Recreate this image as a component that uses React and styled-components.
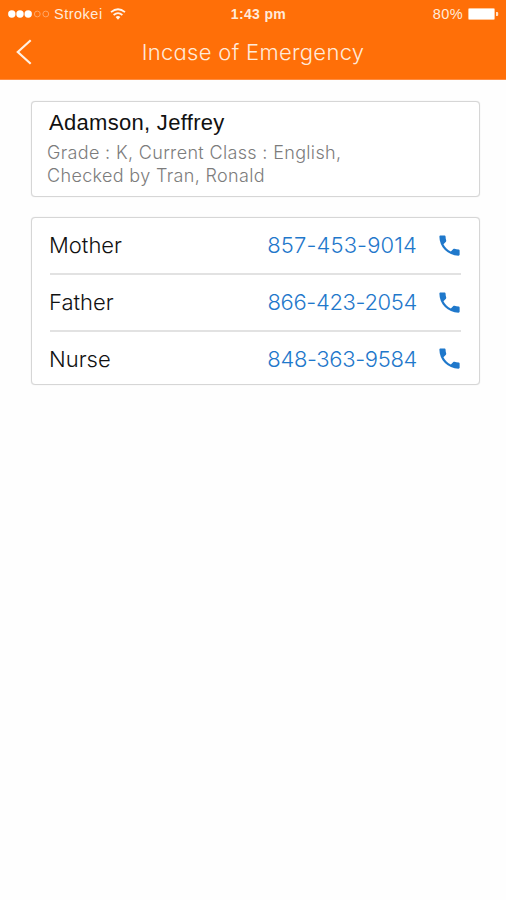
import React from 'react';
import styled, { createGlobalStyle } from 'styled-components';

const GlobalStyle = createGlobalStyle`
  * {
    box-sizing: border-box;
  }
  body {
    background: #fefefe;
    font-family: 'Liberation Sans', Arial, sans-serif;
    margin: 0;
  }
`;

const Screen = styled('div')`
  height: 900px;
  overflow: hidden;
  width: 506px;
`;

const Header = styled('header')`
  background: #ff6f08;
  border-bottom: 1px solid #ff8d42;
  color: #ffeada;
  height: 80px;
`;

const StatusBar = styled('div')`
  align-items: center;
  display: grid;
  font-size: 14.5px;
  grid-template-columns: 1fr auto 1fr;
  height: 28px;
  line-height: 28px;
  padding: 0 7px 0 8px;
`;

const Carrier = styled('div')`
  align-items: center;
  display: flex;
`;

const CarrierName = styled('span')`
  letter-spacing: 0.5px;
  margin: 0 7px 0 4px;
`;

const Time = styled('span')`
  font-size: 14px;
  font-weight: bold;
  letter-spacing: 0.35px;
  padding-left: 10px;
`;

const Power = styled('div')`
  align-items: center;
  display: flex;
  gap: 5px;
  justify-content: flex-end;
  letter-spacing: 0.4px;
`;

const NavBar = styled('div')`
  align-items: center;
  display: grid;
  grid-template-columns: 40px 1fr 52px;
  height: 47px;
  padding-left: 12px;
`;

const BackButton = styled('button')`
  background: none;
  border: 0;
  cursor: pointer;
  display: flex;
  padding: 0;
`;

const Title = styled('h1')`
  font-family: Inter, sans-serif;
  font-feature-settings: 'cv11';
  font-size: 22px;
  font-weight: 300;
  letter-spacing: 0.3px;
  line-height: 28px;
  margin: 0;
  text-align: center;
  white-space: nowrap;
`;

const Content = styled('main')`
  display: flex;
  flex-direction: column;
  gap: 20px;
  padding: 21px 26px 0 31px;
`;

const Card = styled('section')`
  background: #fff;
  border: 1px solid #d6d6d6;
  border-radius: 4px;
  box-shadow: 0 0 1px #d8d8d8;
`;

const StudentCard = styled(Card)`
  height: 96px;
  padding: 7px 15px 0;
`;

const StudentName = styled('h2')`
  color: #111;
  font-size: 22px;
  font-weight: normal;
  letter-spacing: 0.3px;
  line-height: 28px;
  margin: 0 0 5px 2px;
`;

const Details = styled('p')`
  color: #7c7c7c;
  font-family: Inter, sans-serif;
  font-size: 18px;
  font-weight: 300;
  letter-spacing: 0.34px;
  line-height: 22.5px;
  margin: 0;
`;

const ContactCard = styled(Card)`
  height: 168px;
  padding: 0 18px;
`;

const ContactRow = styled('div')`
  align-items: center;
  border-top: ${({ $first }) => ($first ? '0' : '2px solid #e2e2e2')};
  color: #111;
  display: flex;
  font-family: Inter, sans-serif;
  font-size: 22px;
  font-weight: 300;
  height: ${({ $first }) => ($first ? '55px' : '56.5px')};
  line-height: 28px;
  padding-bottom: ${({ $first }) => ($first ? '1px' : '0.5px')};
`;

const ContactName = styled('span')`
  margin-left: -1px;
`;

const PhoneNumber = styled('a')`
  color: #1f78cb;
  letter-spacing: ${({ $tracking }) => $tracking}px;
  margin: 0 19px 0 auto;
  text-decoration: none;
`;

const SignalIcon = () => (
  <svg width="42" height="12" viewBox="0 0 42 12">
    {[4, 12.2, 20.4].map(x => (
      <circle key={x} cx={x - 0.2} cy="6" r="3.7" fill="#fff" />
    ))}
    {[29.3, 37.8].map(x => (
      <circle key={x} cx={x} cy="6" r="2.9" fill="none" stroke="#ffa766" />
    ))}
  </svg>
);

const WifiIcon = () => (
  <svg width="16" height="12" viewBox="0 0 16 12" fill="none" stroke="#fff4ea">
    <path d="M1 4.1Q8-1.5 15 4.1" strokeWidth="1.8" />
    <path d="M3.6 7Q8 3.3 12.4 7" strokeWidth="1.8" />
    <path d="M5.6 9Q8 7 10.4 9L8 11.7Z" fill="#fff4ea" stroke="none" />
  </svg>
);

const BatteryIcon = () => (
  <svg width="31" height="12" viewBox="0 0 31 12">
    <rect x="0.5" y="0.5" width="26" height="11" rx="1" fill="#fff" stroke="#ffc79c" />
    <path d="M28 4h1.2a1 1 0 0 1 1 1v2a1 1 0 0 1-1 1H28z" fill="#ffe2cb" />
  </svg>
);

const BackIcon = () => (
  <svg width="24" height="28" viewBox="0 0 24 28" fill="none">
    <path d="M18.7 2.3L5.8 14L18.7 25.8" stroke="#fff0e3" strokeWidth="2.2" />
  </svg>
);

const CallIcon = styled('svg')`
  fill: #1f78cb;
  height: 27px;
  margin-right: -2px;
  width: 27px;
`;

// tracking evens out the proportional digits so the numbers line up
const contacts = [
  { name: 'Mother', phone: '857-453-9014', tracking: 0.12 },
  { name: 'Father', phone: '866-423-2054', tracking: -0.35 },
  { name: 'Nurse', phone: '848-363-9584', tracking: -0.35 },
];

const App = () => (
  <Screen>
    <GlobalStyle />
    <Header>
      <StatusBar>
        <Carrier>
          <SignalIcon />
          <CarrierName>Strokei</CarrierName>
          <WifiIcon />
        </Carrier>
        <Time>1:43 pm</Time>
        <Power>
          80%
          <BatteryIcon />
        </Power>
      </StatusBar>
      <NavBar>
        <BackButton aria-label="Back">
          <BackIcon />
        </BackButton>
        <Title>Incase of Emergency</Title>
      </NavBar>
    </Header>
    <Content>
      <StudentCard>
        <StudentName>Adamson, Jeffrey</StudentName>
        <Details>
          Grade : K, Current Class : English,
          <br />
          Checked by Tran, Ronald
        </Details>
      </StudentCard>
      <ContactCard>
        {contacts.map(({ name, phone, tracking }, index) => (
          <ContactRow key={name} $first={index === 0}>
            <ContactName>{name}</ContactName>
            <PhoneNumber href={`tel:${phone}`} $tracking={tracking}>
              {phone}
            </PhoneNumber>
            <CallIcon viewBox="0 0 24 24">
              <path d="M6.62 10.79c1.44 2.83 3.76 5.14 6.59 6.59l2.2-2.2c.27-.27.67-.36 1.02-.24 1.12.37 2.33.57 3.57.57.55 0 1 .45 1 1V20c0 .55-.45 1-1 1-9.39 0-17-7.61-17-17 0-.55.45-1 1-1h3.5c.55 0 1 .45 1 1 0 1.25.2 2.45.57 3.57.11.35.03.74-.25 1.02l-2.2 2.2z" />
            </CallIcon>
          </ContactRow>
        ))}
      </ContactCard>
    </Content>
  </Screen>
);

export default App;
